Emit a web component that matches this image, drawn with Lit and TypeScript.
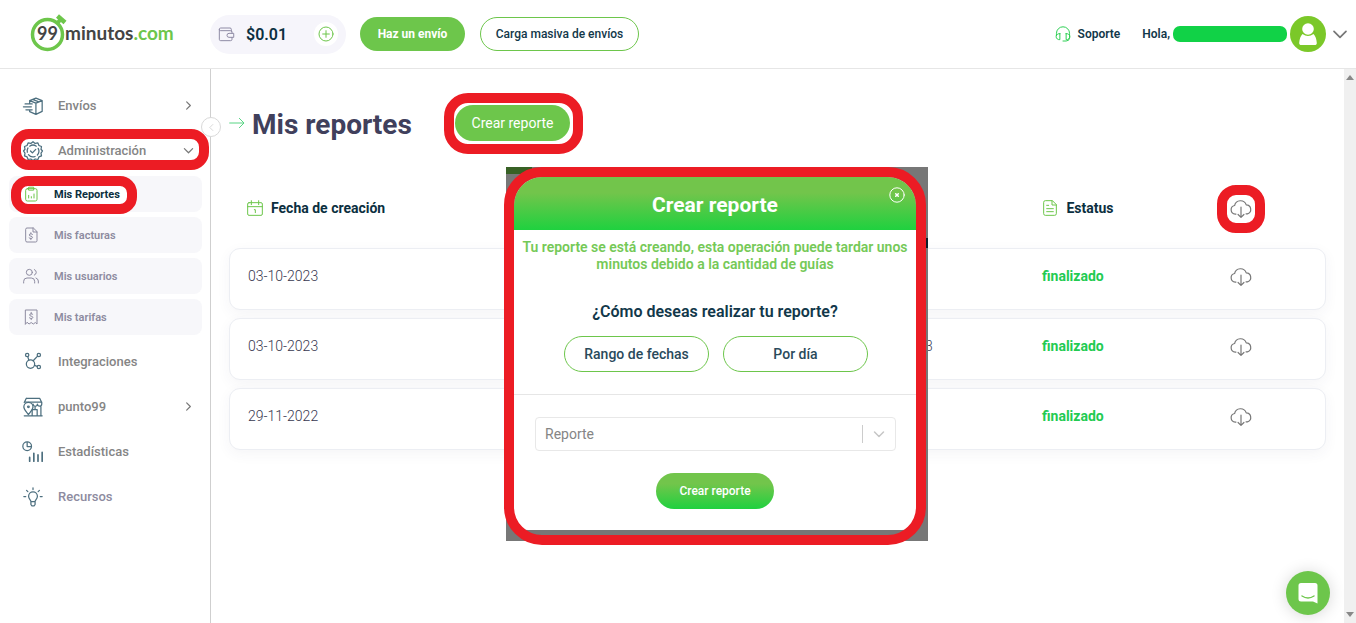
import { LitElement, html, css, svg, nothing } from "lit";
import { customElement, state } from "lit/decorators.js";

const icons = {
  box: svg`<path d="M8 5.500 15.500 2.500 23 5.500v13L15.500 22 8 18.800v-2M8 5.500l7.500 3 7.500-3M15.500 8.500V22M8 5.500v3M11.500 4l7.500 3M2.500 9.500H11M.5 13h9.500M3.500 16.500H11"/>`,
  gear: svg`<path d="M12 .8l2.600 2.100 3.300-.6 1.200 3.100 3.100 1.200-.6 3.300L23.400 12l-1.800 2.600.6 3.300-3.100 1.200-1.200 3.100-3.300-.6L12 23.300l-2.600-1.700-3.300.6-1.200-3.100-3.100-1.200.6-3.300L.6 12l1.800-2.100-.6-3.300 3.100-1.200 1.200-3.100 3.300.6z"/><path d="M8 6.200a7 7 0 0 1 8 0M18.200 8.800a7 7 0 0 1-1 8M14.500 18.600a7 7 0 0 1-8-2.200M5.200 13.500A7 7 0 0 1 6 8.300M9 12l2.300 2.300L15.300 10"/>`,
  report: svg`<rect x="4" y="4" width="17" height="18.500" rx="2.500"/><path d="M9 1.800h7v4.400H9zM8.500 18v-4M12.500 18v-2M16.500 18v-6"/>`,
  invoice: svg`<path d="M15 1.500H6a2 2 0 0 0-2 2v17a2 2 0 0 0 2 2h13a2 2 0 0 0 2-2V7.500zM15 1.500v6h6M14.300 11c-1-1.300-5-1.200-5 1s5 1.300 5 3.500-3.800 2.200-5.200.8M11.800 8.500v1.800M11.800 17v2"/>`,
  users: svg`<circle cx="9.500" cy="6.500" r="4.500"/><path d="M1 22.500v-2.500a5 5 0 0 1 5-5h6.500a5 5 0 0 1 5 5v2.500M17 2.300a4.500 4.500 0 0 1 0 8.400M19.500 15a5 5 0 0 1 3.500 4.500v3"/>`,
  tariff: svg`<path d="M3.500 22.500V1.500h17.500v21l-2.500-2.200-3 2.200-3.200-2.200-3.200 2.200-2.600-2.200zM14.800 8c-1-1.300-5-1.200-5 1s5 1.300 5 3.500-3.800 2.200-5.200.8M12.300 5v2M12.300 14v2"/>`,
  nodes: svg`<circle cx="9" cy="14.500" r="5"/><circle cx="5" cy="3.500" r="2"/><circle cx="19" cy="3.500" r="2"/><circle cx="19" cy="18" r="2"/><path d="M5.700 5.500 7 9.800M17.500 5l-5.300 5.500M13.800 16l3.300 1.200"/>`,
  store: svg`<path d="M4 1.500h16l2.500 5v2a2.600 2.600 0 0 1-5.200 0 2.600 2.600 0 0 1-5.200 0M4 1.500l-2.500 5M3 6h19.500M21.500 11.500V22M1.500 22.500h21.500M11 22v-7h6v7M14.500 11.500v3.500"/><path d="M6.500 21C3.500 17 1 14.800 1 12a5.500 5.500 0 0 1 11 0c0 2.800-2.500 5-5.500 9z"/><circle cx="6.500" cy="11.800" r="1"/>`,
  stats: svg`<circle cx="5" cy="5" r="5.200"/><path d="M5 .5V5.500h5"/><path stroke-width="2" d="M8 18.500V23M13 13.500V23M18 15.500V23M23 12.500V23"/>`,
  bulb: svg`<path d="M9.500 17.500c0-2-2.800-3-2.800-6.300a5.300 5.300 0 0 1 10.600 0c0 3.300-2.800 4.300-2.800 6.300zM9.500 17.500V21l1 1.500h3l1-1.500v-3.500M12 1v2M1 11.500h2.300M20.700 11.500H23M4.300 4l1.500 1.500M19.700 4l-1.500 1.500"/>`,
  wallet: svg`<path d="M20 8V5a2 2 0 0 0-2-2H4a2 2 0 0 0 0 4h15a2 2 0 0 1 2 2v2M2 5v15a2 2 0 0 0 2 2h15a2 2 0 0 0 2-2v-3M23 11h-6.500a3 3 0 0 0 0 6H23z"/>`,
  plus: svg`<circle cx="12" cy="12" r="10.500"/><path d="M12 7v10M7 12h10"/>`,
  headset: svg`<path d="M2.200 14.500V11a9.800 9.800 0 0 1 19.600 0v6.500a5 5 0 0 1-5 5H12"/><path d="M7.300 11.500v9a5 4.500 0 0 1-5.600-4.500 4.500 4.500 0 0 1 5.600-4.500zM16.700 11.500v9a5 4.500 0 0 0 5.600-4.500 4.500 4.500 0 0 0-5.600-4.500z"/>`,
  calendar: svg`<rect x="1" y="4" width="22" height="19" rx="2"/><path d="M1 10h22M6.500 1v6M17.500 1v6M11 14.500h1.500V19"/>`,
  sheet: svg`<path d="M15 1H5a2.500 2.500 0 0 0-2.500 2.500v17A2.500 2.500 0 0 0 5 23h14a2.500 2.500 0 0 0 2.500-2.500v-13zM15 1v6.500h6.500M7 8h3M7 13h10M7 17.500h10"/>`,
  cloud: svg`<path d="M6.500 17.500H5.700A4.700 4.700 0 0 1 5 8.200 6.600 6.600 0 0 1 17.700 7.500a5 5 0 0 1 1.300 9.800h-1.500M12 10v11M8.800 18l3.200 3.200 3.200-3.200"/>`,
  right: svg`<path d="m8 4 8 8-8 8"/>`,
  left: svg`<path d="m15.500 4-8 8 8 8"/>`,
  down: svg`<path d="m3 8 9 9 9-9"/>`,
  arrow: svg`<path d="M1 12h21M15.500 5l7 7-7 7"/>`,
};
type IconName = keyof typeof icons;

const icon = (name: IconName, cls = "") =>
  html`<svg class="icon ${cls}" viewBox="0 0 24 24" aria-hidden="true">${icons[name]}</svg>`;

interface Entry {
  label: string;
  icon: IconName;
  chevron?: IconName;
  muted?: boolean;
  marked?: boolean;
  children?: Entry[];
}

const menu: Entry[] = [
  { label: "Envíos", icon: "box", chevron: "right" },
  {
    label: "Administración",
    icon: "gear",
    chevron: "down",
    marked: true,
    children: [
      { label: "Mis Reportes", icon: "report", marked: true },
      { label: "Mis facturas", icon: "invoice" },
      { label: "Mis usuarios", icon: "users" },
      { label: "Mis tarifas", icon: "tariff" },
    ],
  },
  { label: "Integraciones", icon: "nodes" },
  { label: "punto99", icon: "store", chevron: "right" },
  { label: "Estadísticas", icon: "stats" },
  { label: "Recursos", icon: "bulb", muted: true },
];

const reports = [
  { created: "03-10-2023", extra: "", status: "finalizado" },
  { created: "03-10-2023", extra: "3", status: "finalizado" },
  { created: "29-11-2022", extra: "", status: "finalizado" },
];

const shared = css`
  * { box-sizing: border-box; }
  button, select { font: inherit; color: inherit; margin: 0; padding: 0; border: 0; background: none; cursor: pointer; }
  a { color: inherit; text-decoration: none; }
  h1, h2, p, ul { margin: 0; padding: 0; }
  ul { list-style: none; }
  .icon { display: block; flex: none; width: 20px; height: 20px; overflow: visible; fill: none; stroke: currentColor; stroke-width: 1.5; stroke-linecap: round; stroke-linejoin: round; }
  .ring { position: absolute; border: 10px solid #ec1c24; pointer-events: none; }
`;

@customElement("top-bar")
class TopBar extends LitElement {
  static styles = [shared, css`
    :host { display: block; border-bottom: 1px solid #e6e6e6; }
    .bar { display: flex; align-items: center; height: 68px; padding: 0 8px 0 30px; font-weight: 600; color: #12384a; }
    .logo { display: block; width: 146px; height: 40px; margin-right: 34px; font-family: Lato, sans-serif; font-weight: 700; }
    .wallet { display: flex; align-items: center; width: 136px; height: 39px; padding: 0 8px; border-radius: 20px; background: #f6f5fb; color: #8f8ba5; }
    .wallet .icon { width: 16px; height: 16px; }
    .amount { flex: 1; padding-left: 12px; font-size: 16px; color: #0b2f40; }
    .add { display: grid; place-items: center; width: 24px; height: 24px; border-radius: 50%; background: #fff; color: #6dc64b; }
    .pill { height: 34px; border-radius: 17px; font-size: 12px; }
    .solid { width: 105px; margin-left: 14px; background: #6dc64b; color: #fff; font-weight: 700; }
    .line { width: 159px; margin-left: 15px; border: 1px solid #6dc64b; font-weight: 500; }
    .right { display: flex; align-items: center; margin-left: auto; font-size: 12px; }
    .support { display: flex; align-items: center; gap: 7px; margin-right: 22px; }
    .support .icon { width: 16px; height: 16px; color: #2ed054; }
    .name { width: 114px; height: 16px; margin: 0 3px; border-radius: 7px; background: #11d247; }
    .avatar { display: block; width: 36px; height: 36px; }
    .chev { width: 16px; height: 16px; margin-left: 6px; color: #777; stroke-width: 2.6; }
  `];
  render() {
    return html`<header class="bar">
      <svg class="logo" viewBox="0 0 146 40" role="img" aria-label="99minutos.com">
        <path d="M27.500 2 35 8.500" stroke="#6dc64b" stroke-width="4.500"/><path d="m27.500 9 3-3.500" stroke="#6dc64b" stroke-width="4"/>
        <circle cx="17.500" cy="20.500" r="15" fill="#fff" stroke="#6dc64b" stroke-width="3.500"/>
        <text x="7" y="26" font-size="18" fill="#444">99</text>
        <text x="35" y="26" font-size="19" fill="#444">minutos<tspan fill="#6dc64b">.com</tspan></text>
      </svg>
      <div class="wallet">${icon("wallet")}<span class="amount">$0.01</span>
        <button class="add" aria-label="Agregar saldo">${icon("plus")}</button></div>
      <button class="pill solid">Haz un envío</button>
      <button class="pill line">Carga masiva de envíos</button>
      <div class="right">
        <a class="support" href="#soporte">${icon("headset")}Soporte</a>
        <span>Hola,</span><span class="name"></span>
        <svg class="avatar" viewBox="0 0 36 36" aria-hidden="true"><circle cx="18" cy="18" r="18" fill="#7bc829"/><circle cx="18" cy="13" r="5.800" fill="#fff"/><path fill="#fff" d="M12.500 18q5.500 4 11 0c2 2 3 5 3.300 9 0 1.500-.8 2-2 2H11.200c-1.200 0-2-.5-2-2 .3-4 1.300-7 3.300-9z"/></svg>
        ${icon("down", "chev")}
      </div>
    </header>`;
  }
}

@customElement("side-menu")
class SideMenu extends LitElement {
  static styles = [shared, css`
    :host { display: block; position: relative; flex: none; width: 211px; padding-top: 14px; border-right: 1px solid #cfcfcf; font-size: 13px; font-weight: 500; color: #858585; }
    .item { position: relative; display: flex; align-items: center; height: 45px; padding: 0 16px 0 23px; }
    .item > .icon { color: #4d6f7f; }
    .item .label { flex: 1; padding-left: 15px; }
    .item .chev { width: 11px; height: 11px; color: #777; stroke-width: 2.6; }
    .muted { color: #8d8ba0; }
    .sub { display: flex; flex-direction: column; gap: 5px; padding: 3px 8px 4px 9px; font-size: 11px; font-weight: 600; color: #8d8ba0; }
    .subitem { position: relative; display: flex; align-items: center; gap: 15px; height: 36px; padding-left: 14px; border-radius: 8px; background: #f7f7fa; }
    .subitem .icon { width: 16px; height: 16px; }
    .current { color: #0b2f40; font-weight: 700; }
    .current .icon { color: #6dc64b; }
    .wide { inset: 1px 1px 3px 11px; border-radius: 18px; }
    .short { top: 0; left: 2px; width: 126px; height: 38px; border-radius: 17px; background: #fff; background-clip: padding-box; }
    .current > .icon, .current > .text { position: relative; z-index: 1; }
    .toggle { position: absolute; top: 48px; right: -11px; display: grid; place-items: center; width: 20px; height: 20px; border: 1px solid #d9d9d9; border-radius: 50%; background: #fff; color: #bbb; }
    .toggle .icon { width: 9px; height: 9px; }
  `];
  render() {
    return html`<nav aria-label="Principal"><ul>${menu.map((m) => html`<li>
        <a class="item ${m.muted ? "muted" : ""}" href="#">${icon(m.icon)}<span class="label">${m.label}</span>
          ${m.chevron ? icon(m.chevron, "chev") : nothing}${m.marked ? html`<span class="ring wide"></span>` : nothing}</a>
        ${m.children ? html`<ul class="sub">${m.children.map((c) => html`<li>
          <a class="subitem ${c.marked ? "current" : ""}" href="#">${c.marked ? html`<span class="ring short"></span>` : nothing}${icon(c.icon)}<span class="text">${c.label}</span></a></li>`)}</ul>` : nothing}
      </li>`)}</ul></nav>
      <button class="toggle" aria-label="Contraer menú">${icon("left")}</button>`;
  }
}

@customElement("report-table")
class ReportTable extends LitElement {
  static styles = [shared, css`
    :host { display: block; }
    table, thead, tbody { display: block; }
    tbody { display: grid; gap: 8px; }
    tr { display: grid; grid-template-columns: 677fr 117fr 132fr 133fr; align-items: center; padding: 0 18px; }
    th, td { display: block; padding: 0; text-align: left; }
    thead tr { height: 48px; margin-bottom: 16px; color: #0b2f40; font-size: 14px; font-weight: 700; }
    .head { display: flex; align-items: center; gap: 8px; }
    .head .icon { width: 16px; height: 16px; color: #6dc64b; }
    tbody tr { height: 62px; padding-bottom: 6px; border: 1px solid #eceef3; border-radius: 11px; background: #fff; box-shadow: 0 4px 14px rgba(60, 60, 90, 0.05); }
    .date { font-size: 14px; font-weight: 300; color: #37374f; }
    .status { font-size: 14px; font-weight: 700; color: #22cb52; }
    .action { display: grid; justify-items: center; padding-top: 2px; }
    .save { position: relative; color: #777; }
    .save .icon { width: 22px; height: 22px; stroke-width: 1.3; }
    .small { inset: -13px; border-radius: 19px; }
  `];
  render() {
    return html`<table>
      <thead><tr>
        <th scope="col"><span class="head">${icon("calendar")}Fecha de creación</span></th>
        <th></th>
        <th scope="col"><span class="head">${icon("sheet")}Estatus</span></th>
        <th class="action"><button class="save" aria-label="Descargar todo">${icon("cloud")}<span class="ring small"></span></button></th>
      </tr></thead>
      <tbody>${reports.map((r) => html`<tr>
        <td class="date">${r.created}</td><td class="date">${r.extra}</td><td class="status">${r.status}</td>
        <td class="action"><button class="save" aria-label="Descargar">${icon("cloud")}</button></td>
      </tr>`)}</tbody>
    </table>`;
  }
}

@customElement("report-dialog")
class ReportDialog extends LitElement {
  @state() mode = "";
  static styles = [shared, css`
    :host { display: block; width: 422px; height: 374px; padding: 10px 12px 11px 8px; background: linear-gradient(#0b1f2a, #0b1f2a) right 71px / 3px 10px no-repeat, linear-gradient(#386125, #386125) left top / 26px 7px no-repeat, #777; }
    .panel { display: flex; flex-direction: column; height: 100%; border-radius: 28px 28px 14px 14px; overflow: hidden; background: #fff; text-align: center; }
    .title { position: relative; display: grid; place-items: center; height: 53px; padding-top: 2px; background: linear-gradient(#72c54b 30%, #1fd13f); color: #fff; }
    h2 { font-size: 21px; line-height: 24px; font-weight: 700; }
    .close { position: absolute; top: 10px; right: 11px; width: 16px; height: 16px; }
    .close .icon { width: 16px; height: 16px; }
    .note { padding: 9px 4px 0; font-size: 14px; line-height: 17px; font-weight: 600; color: #75c957; }
    .ask { padding-top: 29px; font-size: 16px; line-height: 20px; font-weight: 600; color: #12384a; }
    .modes { display: flex; justify-content: center; gap: 14px; padding: 14px 0 22px 2px; border-bottom: 1px solid #e6e6e6; }
    .mode { width: 145px; height: 36px; border: 1px solid #6dc64b; border-radius: 18px; font-size: 14px; font-weight: 500; color: #2a4a5b; }
    .field { display: flex; align-items: center; height: 34px; margin: 22px 20px 22px 21px; border: 1px solid #e8e8e8; border-radius: 4px; color: #c6c6c6; }
    select { flex: 1; height: 100%; padding-left: 9px; appearance: none; outline: 0; font-size: 14px; color: #858585; }
    .split { width: 1px; height: 18px; background: #ccc; }
    .chev { width: 12px; height: 12px; margin: 0 10px; stroke-width: 3; }
    .submit { align-self: center; width: 118px; height: 36px; border-radius: 18px; background: linear-gradient(#72c54b 30%, #1fd13f); color: #fff; font-size: 12px; font-weight: 500; }
    .frame { top: 0; left: -2px; width: 422px; height: 378px; border-radius: 38px; }
  `];
  render() {
    return html`<section class="panel" role="dialog" aria-labelledby="title">
        <div class="title"><h2 id="title">Crear reporte</h2>
          <button class="close" aria-label="Cerrar"><svg class="icon" viewBox="0 0 16 16"><circle cx="8" cy="8" r="7.200" stroke-width="1"/><path d="m6.700 6.700 2.600 2.600m0-2.600L6.700 9.300"/></svg></button></div>
        <p class="note">Tu reporte se está creando, esta operación puede tardar unos minutos debido a la cantidad de guías</p>
        <p class="ask">¿Cómo deseas realizar tu reporte?</p>
        <div class="modes">${["Rango de fechas", "Por día"].map((m) => html`<button class="mode" aria-pressed=${this.mode === m} @click=${() => (this.mode = m)}>${m}</button>`)}</div>
        <div class="field"><select aria-label="Reporte"><option>Reporte</option></select><span class="split"></span>${icon("down", "chev")}</div>
        <button class="submit">Crear reporte</button>
      </section><span class="ring frame"></span>`;
  }
}

@customElement("app-root")
class AppRoot extends LitElement {
  static styles = [shared, css`
    :host { display: flex; flex-direction: column; min-height: 100vh; background: #fff; font-family: Roboto, "Liberation Sans", sans-serif; }
    .body { display: flex; flex: 1; }
    main { position: relative; flex: 1; min-width: 0; padding: 36px 18px 0; }
    .heading { display: flex; align-items: flex-end; height: 36px; margin-bottom: 43px; }
    .heading > .icon { width: 16px; height: 16px; margin: 0 7px 10px 0; color: #58d584; }
    h1 { min-width: 203px; font-size: 28px; line-height: 32px; font-weight: 700; color: #40405c; }
    .create { position: relative; width: 115px; height: 36px; border-radius: 18px; background: #6dc64b; color: #fff; font-size: 14px; }
    .mark { inset: -12px -13px -13px -11px; border-radius: 24px; }
    report-dialog { position: absolute; top: 98px; left: 295px; }
    .scroll { display: flex; flex-direction: column; justify-content: space-between; align-items: center; width: 12px; padding: 6px 0; background: #f0f0f0; }
    .scroll svg { display: block; width: 8px; height: 5px; fill: #888; }
    .chat { position: fixed; right: 26px; bottom: 8px; display: grid; place-items: center; width: 44px; height: 44px; border-radius: 50%; background: #6dc64b; box-shadow: 0 1px 16px rgba(0, 0, 0, 0.16); }
    .chat svg { display: block; width: 20px; height: 22px; }
  `];
  render() {
    return html`<top-bar></top-bar>
      <div class="body"><side-menu></side-menu>
        <main>
          <div class="heading">${icon("arrow")}<h1>Mis reportes</h1>
            <button class="create">Crear reporte<span class="ring mark"></span></button></div>
          <report-table></report-table>
          <report-dialog></report-dialog>
        </main>
        <div class="scroll" aria-hidden="true"><svg viewBox="0 0 8 5"><path d="M0 5 4 0l4 5z"/></svg><svg viewBox="0 0 8 5"><path d="M0 0h8L4 5z"/></svg></div>
      </div>
      <button class="chat" aria-label="Abrir chat"><svg viewBox="0 0 20 22"><path fill="#fff" d="M3 1h14a2.500 2.500 0 0 1 2.500 2.500V21.500L15 19.500H3A2.500 2.500 0 0 1 .500 17V3.500A2.500 2.500 0 0 1 3 1z"/><path d="M4 14q6 4 12 0" fill="none" stroke="#6dc64b" stroke-width="1.400" stroke-linecap="round"/></svg></button>`;
  }
}
